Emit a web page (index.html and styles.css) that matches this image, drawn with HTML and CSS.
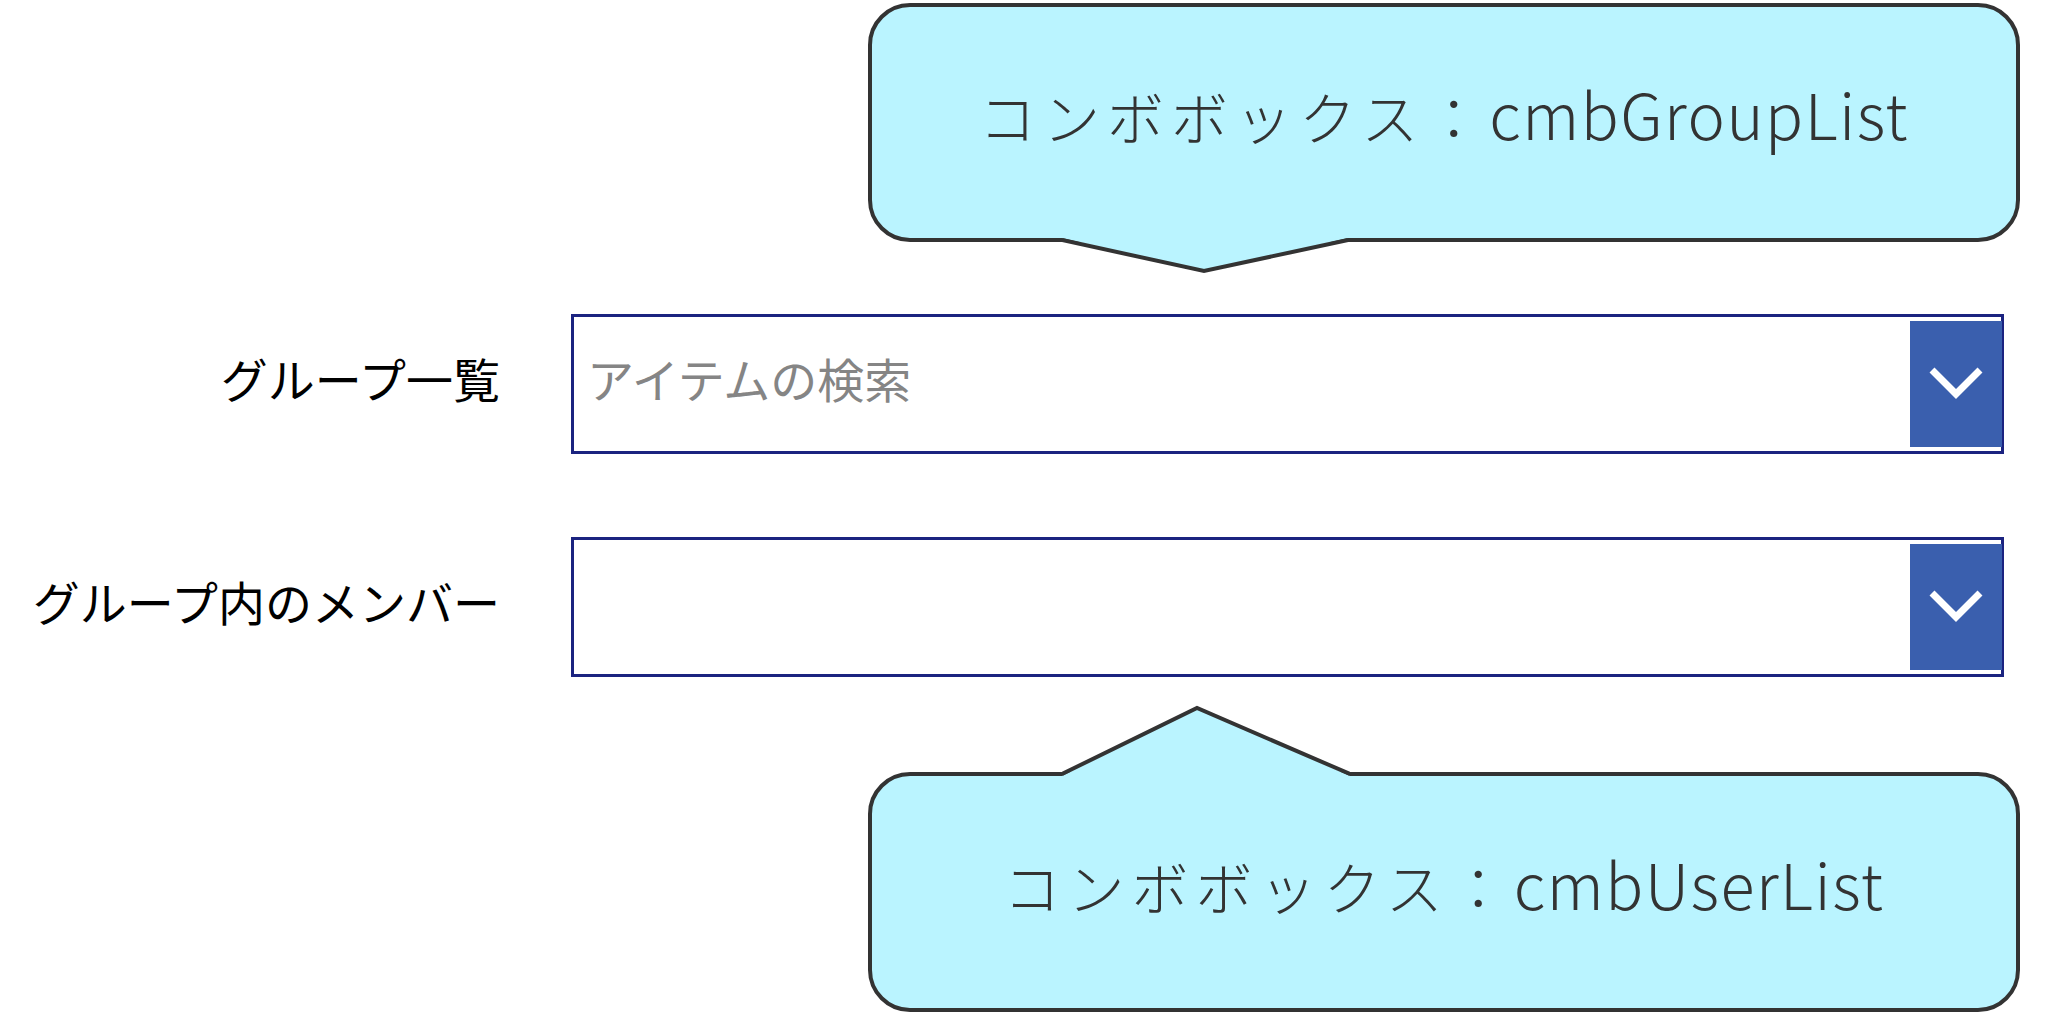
FILE: index.html
```html
<!DOCTYPE html>
<html lang="ja">
  <head>
    <meta charset="UTF-8" />
    <meta name="viewport" content="width=device-width, initial-scale=1.0" />
    <title>グループメンバー</title>
    <link rel="stylesheet" href="styles.css">
  </head>
  <body>
    <aside class="callout callout-down">
      <p><span class="kana">コンボボックス：</span><span class="code">cmbGroupList</span></p>
      <svg class="tail" width="288" height="36" viewBox="0 0 288 36">
        <polygon points="0,0 142,33 286,0" fill="#baf4ff" />
        <polyline points="0,2 142,33 286,2" fill="none" stroke="#333" stroke-width="4" />
      </svg>
    </aside>

    <main class="form">
      <label class="label" for="cmbGroupList">グループ一覧</label>
      <div class="combo">
        <input id="cmbGroupList" class="combo-input" type="text" placeholder="アイテムの検索" />
        <span class="combo-button">
          <svg width="56" height="34" viewBox="0 0 56 34">
            <polyline points="4,3 28,27 52,3" fill="none" stroke="#fff" stroke-width="7" />
          </svg>
        </span>
      </div>

      <label class="label" for="cmbUserList">グループ内のメンバー</label>
      <div class="combo">
        <input id="cmbUserList" class="combo-input" type="text" />
        <span class="combo-button">
          <svg width="56" height="34" viewBox="0 0 56 34">
            <polyline points="4,3 28,27 52,3" fill="none" stroke="#fff" stroke-width="7" />
          </svg>
        </span>
      </div>
    </main>

    <aside class="callout callout-up">
      <svg class="tail" width="288" height="72" viewBox="0 0 288 72">
        <polygon points="0,72 135,4 288,72" fill="#baf4ff" />
        <polyline points="0,70 135,4 288,70" fill="none" stroke="#333" stroke-width="4" />
      </svg>
      <p><span class="kana">コンボボックス：</span><span class="code">cmbUserList</span></p>
    </aside>
  </body>
</html>
```

FILE: styles.css
```css
/* styles.css */
body {
  margin: 0;
  background-color: #fff;
  font-family: "Noto Sans CJK JP", "Noto Sans", sans-serif;
}

/* speech bubbles */
.callout {
  position: relative;
  box-sizing: border-box;
  width: 1152px;
  margin-left: 868px;
  display: flex;
  justify-content: center;
  align-items: center;
  background-color: #baf4ff;
  border: 4px solid #333;
  border-radius: 42px;
}

.callout p {
  margin: 0 0 20px;
  font-weight: 300;
  color: #333;
  white-space: nowrap;
}

.callout .kana {
  font-size: 57px;
  letter-spacing: 7px;
}

.callout .code {
  font-size: 63px;
  letter-spacing: 1.5px;
}

.callout .tail {
  position: absolute;
  left: 190px;
  display: block;
}

.callout-down {
  height: 239px;
  margin-top: 3px;
}

.callout-down .tail {
  top: 100%;
}

.callout-up {
  height: 240px;
  margin-top: 95px;
}

.callout-up .tail {
  bottom: 100%;
}

/* form rows */
.form {
  display: grid;
  grid-template-columns: 500px 1433px;
  column-gap: 71px;
  row-gap: 83px;
  align-items: center;
  margin-top: 72px;
}

.label {
  padding-bottom: 14px;
  text-align: right;
  font-size: 47px;
  color: #000;
  white-space: nowrap;
}

.combo {
  box-sizing: border-box;
  height: 140px;
  display: flex;
  border: 3px solid #1b2380;
  background-color: #fff;
}

.combo-input {
  flex: 1;
  min-width: 0;
  border: none;
  outline: none;
  padding: 0 0 14px 13px;
  background: transparent;
  font-family: inherit;
  font-size: 47px;
  color: #000;
}

.combo-input::placeholder {
  color: #858585;
}

.combo-button {
  width: 92px;
  margin: 4px -1px 4px 0;
  display: flex;
  justify-content: center;
  align-items: center;
  background-color: #3a5fae;
}
```
